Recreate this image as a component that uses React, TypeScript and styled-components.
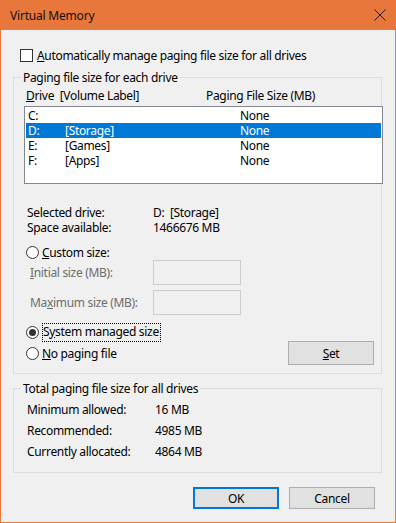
import styled, { createGlobalStyle } from "styled-components";

const GlobalStyle = createGlobalStyle`
  html, body {
    margin: 0;
    padding: 0;
    background: #ffffff;
  }
  * {
    box-sizing: border-box;
  }
`;

const Window = styled.div`
  width: 396px;
  height: 523px;
  display: flex;
  flex-direction: column;
  background: #f0f0f0;
  border: 1px solid #e8773b;
  border-top: none;
  font-family: "Segoe UI", "Noto Sans", sans-serif;
  font-size: 12px;
  line-height: 15px;
  letter-spacing: -0.32px;
  color: #000000;
`;

const TitleBar = styled.div`
  height: 30px;
  margin: 0 -1px;
  padding: 0 9px 0 10px;
  display: flex;
  align-items: center;
  justify-content: space-between;
  background: #e8773b;
`;

const TitleText = styled.span`
  font-size: 12px;
  letter-spacing: -0.2px;
  color: #111111;
`;

const CloseButton = styled.div`
  width: 14px;
  height: 14px;
  display: flex;
  align-items: center;
  justify-content: center;
`;

const Content = styled.div`
  display: flex;
  flex-direction: column;
  padding: 0 12px 0 12px;
`;

const CheckRow = styled.label`
  margin-top: 17px;
  height: 16px;
  padding-left: 7px;
  display: flex;
  align-items: center;
  gap: 4px;
`;

const CheckBox = styled.span`
  width: 13px;
  height: 13px;
  border: 1px solid #333333;
  background: #ffffff;
`;

const GroupBox = styled.div<{ $top: number }>`
  position: relative;
  margin-top: ${(p) => p.$top}px;
  width: 369px;
  border: 1px solid #dcdcdc;
  display: flex;
  flex-direction: column;
`;

const Legend = styled.span`
  position: absolute;
  top: -8px;
  left: 7px;
  padding: 0 2px;
  line-height: 15px;
  background: #f0f0f0;
`;

const ListHeader = styled.div`
  margin-top: 9px;
  height: 16px;
  padding-left: 12px;
  display: grid;
  grid-template-columns: 180px 1fr;
  align-items: center;
`;

const ListBox = styled.div`
  margin: 3px 0 0 10px;
  width: 359px;
  height: 78px;
  border: 1px solid #828790;
  background: #ffffff;
  padding: 1px;
`;

const ListRow = styled.div<{ $selected?: boolean }>`
  height: 15px;
  display: grid;
  grid-template-columns: 37px 175px 1fr;
  align-items: center;
  padding-left: 2px;
  background: ${(p) => (p.$selected ? "#0078d7" : "transparent")};
  color: ${(p) => (p.$selected ? "#ffffff" : "#000000")};
`;

const InfoGrid = styled.div<{ $top: number; $left: number; $col: number; $row: number }>`
  margin-top: ${(p) => p.$top}px;
  padding-left: ${(p) => p.$left}px;
  display: grid;
  grid-template-columns: ${(p) => p.$col}px 1fr;
  grid-auto-rows: ${(p) => p.$row}px;
  align-items: center;
`;

const RadioRow = styled.div<{ $top?: number; $height: number }>`
  margin-top: ${(p) => p.$top ?? 0}px;
  height: ${(p) => p.$height}px;
  padding-left: 12px;
  display: flex;
  align-items: center;
  gap: 3px;
`;

const Radio = styled.span<{ $checked?: boolean }>`
  width: 13px;
  height: 13px;
  border-radius: 50%;
  border: 1px solid #333333;
  background: #ffffff;
  display: flex;
  align-items: center;
  justify-content: center;
  flex-shrink: 0;
  &::after {
    content: "";
    width: 7px;
    height: 7px;
    border-radius: 50%;
    background: #333333;
    display: ${(p) => (p.$checked ? "block" : "none")};
  }
`;

const FocusText = styled.span`
  border: 1px dotted #000000;
  padding: 0 1px 1px 0;
  line-height: 16px;
`;

const SizeGrid = styled.div`
  padding-left: 16px;
  display: grid;
  grid-template-columns: 123px 88px;
  grid-auto-rows: 25px;
  row-gap: 5px;
  align-items: center;
  color: #6d6d6d;
`;

const SizeInput = styled.div`
  height: 25px;
  border: 1px solid #cccccc;
  background: #f0f0f0;
`;

const BottomRow = styled.div`
  height: 24px;
  margin-bottom: 8px;
  padding-right: 7px;
  display: flex;
  align-items: center;
  justify-content: space-between;
`;

const Button = styled.div<{ $default?: boolean; $height: number }>`
  width: 86px;
  height: ${(p) => p.$height}px;
  display: flex;
  align-items: center;
  justify-content: center;
  background: #e1e1e1;
  border: ${(p) => (p.$default ? "2px solid #0078d7" : "1px solid #adadad")};
`;

const ButtonRow = styled.div`
  margin-top: 14px;
  padding-right: 8px;
  display: flex;
  justify-content: flex-end;
  gap: 10px;
`;

const GroupEnd = styled.div`
  height: 10px;
`;

const drives = [
  { drive: "C:", label: "", size: "None" },
  { drive: "D:", label: "[Storage]", size: "None", selected: true },
  { drive: "E:", label: "[Games]", size: "None" },
  { drive: "F:", label: "[Apps]", size: "None" },
];

export default function App() {
  return (
    <>
      <GlobalStyle />
      <Window>
        <TitleBar>
          <TitleText>Virtual Memory</TitleText>
          <CloseButton>
            <svg width="12" height="12" viewBox="0 0 12 12">
              <path d="M0.5 0.5 L11.5 11.5 M11.5 0.5 L0.5 11.5" stroke="#1a1a1a" strokeWidth="1" />
            </svg>
          </CloseButton>
        </TitleBar>
        <Content>
          <CheckRow>
            <CheckBox />
            <span>
              <u>A</u>utomatically manage paging file size for all drives
            </span>
          </CheckRow>

          <GroupBox $top={14}>
            <Legend>Paging file size for each drive</Legend>
            <ListHeader>
              <span>
                <u>D</u>rive&nbsp; [Volume Label]
              </span>
              <span>Paging File Size (MB)</span>
            </ListHeader>
            <ListBox>
              {drives.map((d) => (
                <ListRow key={d.drive} $selected={d.selected}>
                  <span>{d.drive}</span>
                  <span>{d.label}</span>
                  <span>{d.size}</span>
                </ListRow>
              ))}
            </ListBox>

            <InfoGrid $top={21} $left={13} $col={126} $row={15}>
              <span>Selected drive:</span>
              <span>D:&nbsp; [Storage]</span>
              <span>Space available:</span>
              <span>1466676 MB</span>
            </InfoGrid>

            <RadioRow $top={10} $height={15}>
              <Radio />
              <span>
                <u>C</u>ustom size:
              </span>
            </RadioRow>
            <SizeGrid>
              <span>
                <u>I</u>nitial size (MB):
              </span>
              <SizeInput />
              <span>
                Ma<u>x</u>imum size (MB):
              </span>
              <SizeInput />
            </SizeGrid>

            <RadioRow $top={8} $height={18}>
              <Radio $checked />
              <FocusText>
                S<u>y</u>stem managed size
              </FocusText>
            </RadioRow>
            <BottomRow>
              <RadioRow $height={24}>
                <Radio />
                <span>
                  <u>N</u>o paging file
                </span>
              </RadioRow>
              <Button $height={24}>
                <span>
                  <u>S</u>et
                </span>
              </Button>
            </BottomRow>
          </GroupBox>

          <GroupBox $top={14}>
            <Legend>Total paging file size for all drives</Legend>
            <InfoGrid $top={10} $left={13} $col={128} $row={21}>
              <span>Minimum allowed:</span>
              <span>16 MB</span>
              <span>Recommended:</span>
              <span>4985 MB</span>
              <span>Currently allocated:</span>
              <span>4864 MB</span>
            </InfoGrid>
            <GroupEnd />
          </GroupBox>

          <ButtonRow>
            <Button $default $height={22}>
              OK
            </Button>
            <Button $height={22}>Cancel</Button>
          </ButtonRow>
        </Content>
      </Window>
    </>
  );
}
